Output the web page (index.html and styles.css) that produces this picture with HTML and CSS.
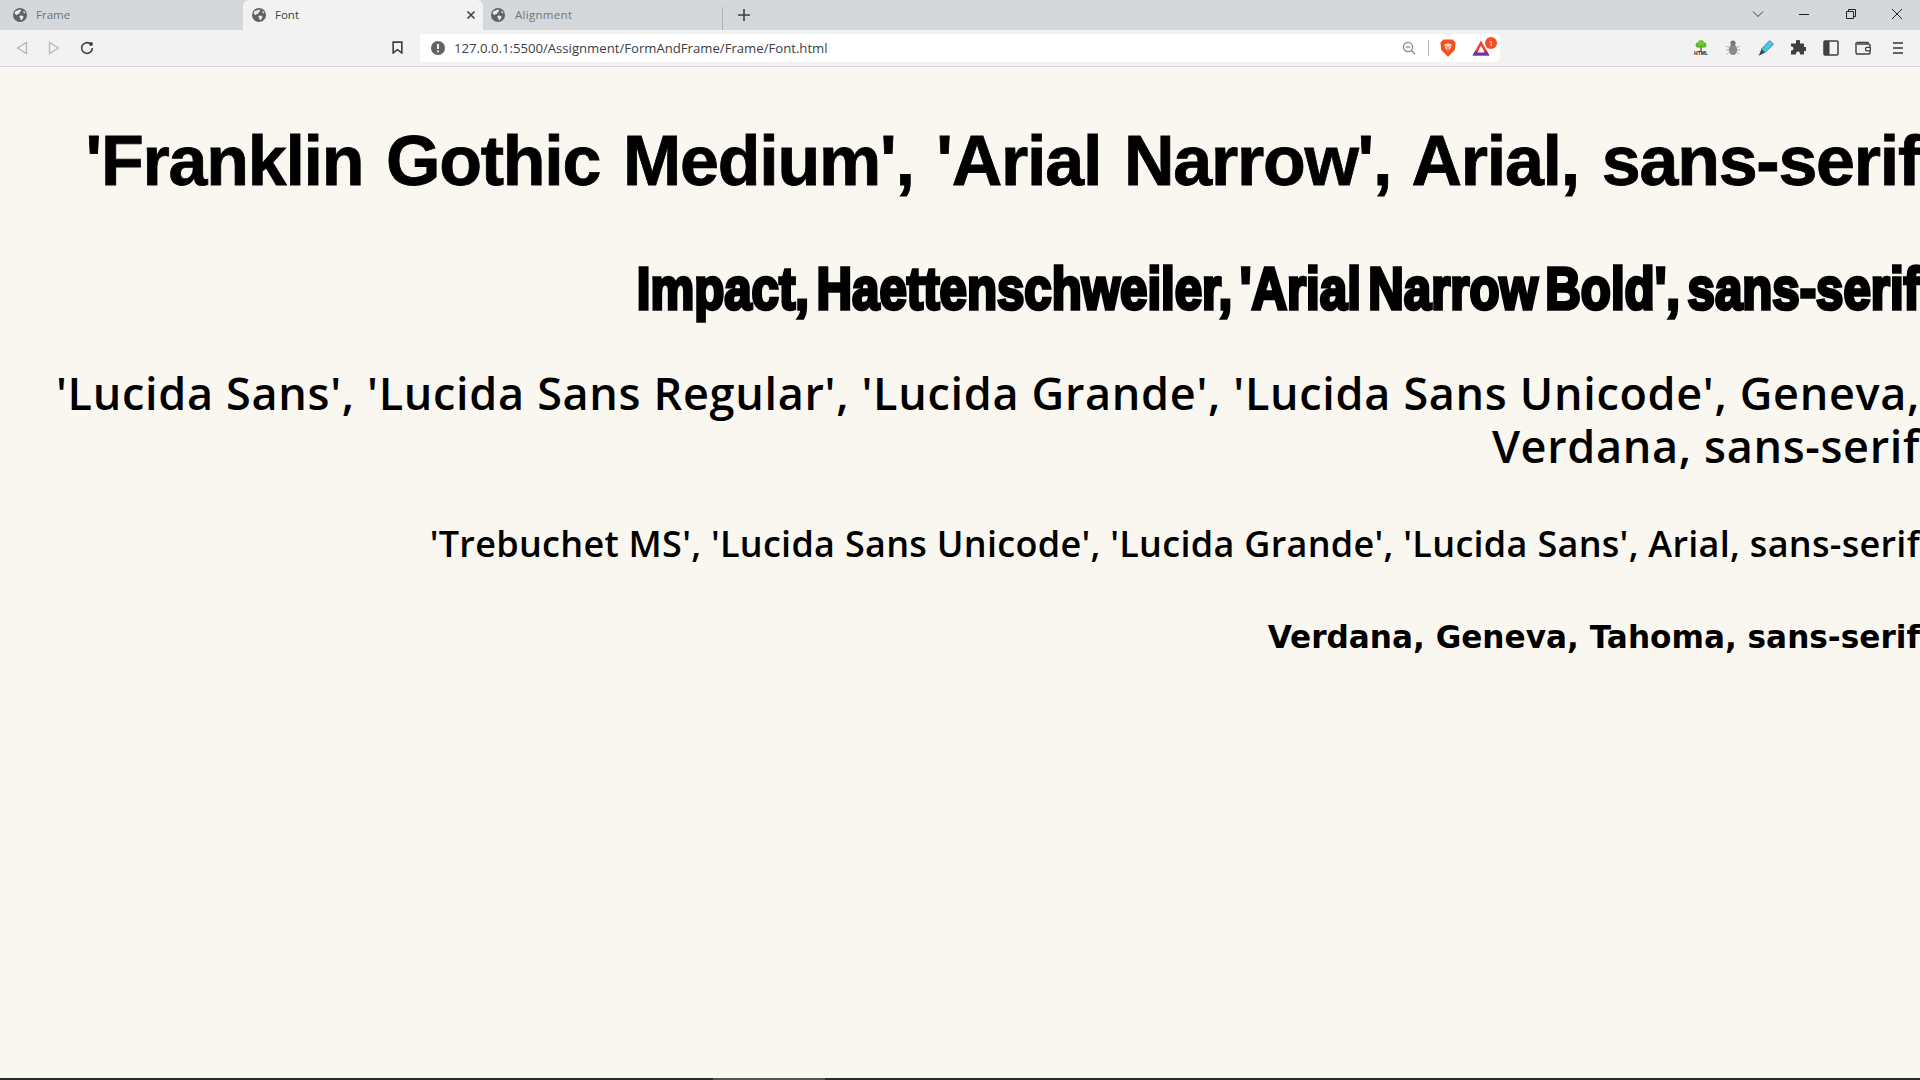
FILE: index.html
```html
<!DOCTYPE html>
<html lang="en">
<head>
    <meta charset="UTF-8">
    <meta name="viewport" content="width=device-width, initial-scale=1.0">
    <title>Font</title>
    <link rel="stylesheet" href="styles.css">
</head>
<body>

<svg class="defs" width="0" height="0">
    <symbol id="globe" viewBox="0 0 14 14">
        <circle cx="7" cy="7" r="7" fill="#5f6368"/>
        <path d="M2.4 3.2 L5 2.2 L7.6 1.6 L8.2 3 L6.4 4.4 L6.2 6 L4.6 6 L3.6 7.2 L1.6 5.6 Z M7.4 7.4 L10.2 8 L10.4 9.6 L8.8 12 L7.8 12.2 L7.2 10 L6.2 8.8 Z M10.8 2.8 L12.6 5 L11.2 5.2 L10.2 4 Z" fill="#e8eaed"/>
    </symbol>
</svg>

<div class="browser">
    <div class="tabstrip">
        <div class="tab">
            <svg class="favicon"><use href="#globe"/></svg>
            <span class="tab-title">Frame</span>
        </div>
        <div class="tab active">
            <svg class="favicon"><use href="#globe"/></svg>
            <span class="tab-title">Font</span>
            <svg class="tab-close" viewBox="0 0 10 10"><path d="M1.5 1.5 L8.5 8.5 M8.5 1.5 L1.5 8.5" stroke="#3c4043" stroke-width="1.6"/></svg>
        </div>
        <div class="tab last">
            <svg class="favicon"><use href="#globe"/></svg>
            <span class="tab-title">Alignment</span>
        </div>
        <svg class="new-tab" viewBox="0 0 12 12"><path d="M6 0 V12 M0 6 H12" stroke="#3c4043" stroke-width="1.6"/></svg>
        <div class="window-controls">
            <svg class="win-icon" viewBox="0 0 12 12"><path d="M1 3.5 L6 8.5 L11 3.5" fill="none" stroke="#3c4043"/></svg>
            <svg class="win-icon" viewBox="0 0 12 12"><path d="M1 6.5 H11" stroke="#202124"/></svg>
            <svg class="win-icon" viewBox="0 0 12 12"><path d="M1.5 3.5 H8.5 V10.5 H1.5 Z M3.5 3.5 V1.5 H10.5 V8.5 H8.5" fill="none" stroke="#202124"/></svg>
            <svg class="win-icon" viewBox="0 0 12 12"><path d="M1 1 L11 11 M11 1 L1 11" stroke="#202124"/></svg>
        </div>
    </div>

    <div class="toolbar">
        <div class="nav-buttons">
            <svg class="nav-icon" viewBox="0 0 12 14"><path d="M10.5 1.5 V12.5 L1.5 7 Z" fill="none" stroke="#b4b7ba" stroke-width="1.3"/></svg>
            <svg class="nav-icon" viewBox="0 0 12 14"><path d="M1.5 1.5 V12.5 L10.5 7 Z" fill="none" stroke="#b4b7ba" stroke-width="1.3"/></svg>
            <svg class="nav-icon" viewBox="0 0 14 14"><path d="M12.4 7 A5.4 5.4 0 1 1 9.8 2.4" fill="none" stroke="#3c4043" stroke-width="1.6"/><circle cx="11" cy="3" r="1.9" fill="#3c4043"/></svg>
        </div>
        <svg class="bookmark" viewBox="0 0 10 12"><path d="M1 1 H9 V11 L5 8 L1 11 Z" fill="none" stroke="#3c4043" stroke-width="1.5"/></svg>
        <div class="address-bar">
            <svg class="info-icon" viewBox="0 0 14 14"><circle cx="7" cy="7" r="7" fill="#5f6368"/><path d="M7 3 V8 M7 9.5 V11.2" stroke="#fff" stroke-width="1.8"/></svg>
            <span class="url">127.0.0.1:5500/Assignment/FormAndFrame/Frame/Font.html</span>
            <svg class="zoom-icon" viewBox="0 0 14 14"><circle cx="6" cy="6" r="4.6" fill="none" stroke="#80868b" stroke-width="1.2"/><path d="M9.5 9.5 L13 13" stroke="#80868b" stroke-width="1.2"/><path d="M3.6 6 H8.4" stroke="#80868b" stroke-width="1.2"/></svg>
            <span class="bar-divider"></span>
            <svg class="brave-icon" viewBox="0 0 16 18">
                <path d="M3.6 0.4 H12.4 L15.6 3.6 L14.8 11 L8 17.8 L1.2 11 L0.4 3.6 Z" fill="#f4511e"/>
                <path d="M4.4 5.4 L6.6 4.6 H9.4 L11.6 5.4 L11 8.4 L9.4 10.6 L8 12 L6.6 10.6 L5 8.4 Z" fill="#ffd9c9"/>
                <path d="M5.8 7.2 L7.2 8 M10.2 7.2 L8.8 8 M7 10.4 H9 M8 8 V10.4" stroke="#f4511e" stroke-width="0.9" fill="none"/>
            </svg>
            <div class="bat-wrap">
                <svg class="bat-icon" viewBox="0 0 18 16">
                    <path d="M9 0.5 L17.5 15.5 H0.5 Z" fill="#f0403c"/>
                    <path d="M3 11.2 H15 L17.5 15.5 H0.5 Z" fill="#7b2d9b"/>
                    <path d="M9 5.6 L12.6 12.4 H5.4 Z" fill="#fff"/>
                </svg>
                <span class="badge">1</span>
            </div>
        </div>
        <div class="extensions">
            <svg class="ext-icon" viewBox="0 0 16 16">
                <circle cx="5.4" cy="5" r="2.8" fill="#5cb82a"/>
                <circle cx="10.6" cy="5" r="2.8" fill="#5cb82a"/>
                <circle cx="8" cy="3" r="3" fill="#6cc636"/>
                <rect x="7.2" y="6" width="1.6" height="5" fill="#a0662a"/>
                <text x="8" y="15.4" class="ext-label">HTML</text>
            </svg>
            <svg class="ext-icon" viewBox="0 0 16 16">
                <ellipse cx="8" cy="9.6" rx="4.2" ry="5.4" fill="#8a8a8a"/>
                <circle cx="8" cy="3" r="2.6" fill="#777"/>
                <path d="M1 6 L4.5 7.6 M15 6 L11.5 7.6 M1 10 H4 M15 10 H12 M1.6 14 L4.6 12.4 M14.4 14 L11.4 12.4" stroke="#b5b5b5" stroke-width="1"/>
            </svg>
            <svg class="ext-icon" viewBox="0 0 16 16">
                <path d="M3.4 9 L11.6 0.6 L15.6 4.2 L7 12.6 Z" fill="#4fc3e8" stroke="#2a6f8e" stroke-width="0.7"/>
                <path d="M3.4 9 L7 12.6 L4.4 14 L0.6 15.8 L2.2 12.2 Z" fill="#37474f"/>
            </svg>
            <svg class="ext-icon" viewBox="0 0 16 16"><path d="M6 1.5 A2 2 0 0 1 10 1.5 V3.5 H14 V7 H15.2 A2 2 0 0 1 15.2 11 H14 V14.5 H10 V13.4 A2 2 0 0 0 6 13.4 V14.5 H1 V10.6 H2 A2.2 2.2 0 0 0 2 6.4 H1 V3.5 H6 Z" fill="#3c4043"/></svg>
            <svg class="ext-icon" viewBox="0 0 16 16"><rect x="1" y="1" width="14" height="14" rx="1" fill="none" stroke="#3c4043" stroke-width="1.5"/><rect x="1" y="1" width="5.5" height="14" fill="#3c4043"/></svg>
            <svg class="ext-icon" viewBox="0 0 16 16"><path d="M13 4 V2.4 L2.6 2.4 A1.5 1.5 0 0 0 1 4 V12.6 A1.5 1.5 0 0 0 2.6 14 H13.4 A1.5 1.5 0 0 0 15 12.6 V5.4 A1.5 1.5 0 0 0 13.4 4 H2" fill="none" stroke="#3c4043" stroke-width="1.4"/><rect x="10.5" y="7.4" width="5" height="3.4" rx="1.6" fill="#f2f2f2" stroke="#3c4043" stroke-width="1.3"/></svg>
            <svg class="ext-icon menu-icon" viewBox="0 0 16 16"><path d="M3 3 H13 M3 8 H13 M3 13 H13" stroke="#5f6368" stroke-width="2"/></svg>
        </div>
    </div>

    <div class="page">
        <h1 class="franklin">'Franklin Gothic Medium', 'Arial Narrow', Arial, sans-serif</h1>
        <h2 class="impact">Impact, Haettenschweiler, 'Arial Narrow Bold', sans-serif</h2>
        <h3 class="lucida">'Lucida Sans', 'Lucida Sans Regular', 'Lucida Grande', 'Lucida Sans Unicode', Geneva, Verdana, sans-serif</h3>
        <h4 class="trebuchet">'Trebuchet MS', 'Lucida Sans Unicode', 'Lucida Grande', 'Lucida Sans', Arial, sans-serif</h4>
        <h5 class="verdana">Verdana, Geneva, Tahoma, sans-serif</h5>
    </div>

    <div class="taskbar-edge"><span class="taskbar-active"></span></div>
</div>

</body>
</html>
```

FILE: styles.css
```css
* {
    box-sizing: border-box;
}
body {
    margin: 0;
    background-color: #faf7f0;
    font-family: "Open Sans", "Noto Sans", sans-serif;
    overflow: hidden;
}
.defs {
    display: block;
    height: 0;
}
.browser {
    display: flex;
    flex-direction: column;
    height: 1080px;
}

/* tabs */
.tabstrip {
    display: flex;
    align-items: stretch;
    height: 30px;
    background-color: #d5d8db;
    flex-shrink: 0;
}
.tab {
    display: flex;
    align-items: center;
    width: 240px;
    padding: 0 0 1px 13px;
    font-size: 11.5px;
    color: #6f7478;
}
.tab.active {
    background-color: #f2f2f2;
    border-radius: 6px 6px 0 0;
    color: #3c4043;
    margin-left: 3px;
    padding-left: 9px;
}
.tab.last {
    width: 240px;
    border-right: 1px solid #b0b3b6;
    margin: 7px 0 0;
    height: 23px;
    padding: 0 0 8px 8px;
}
.tab.last .favicon {
    margin-right: 10px;
}
.tab.last .tab-title {
    letter-spacing: 0.3px;
}
.favicon {
    width: 14px;
    height: 14px;
    margin-right: 9px;
    flex-shrink: 0;
}
.tab-title {
    flex: 1;
}
.tab-close {
    width: 10px;
    height: 10px;
    margin-right: 7px;
}
.new-tab {
    width: 12px;
    height: 12px;
    margin: 9px 0 0 15px;
}
.window-controls {
    display: flex;
    align-items: center;
    margin-left: auto;
    padding-right: 11px;
    gap: 28.5px;
}
.win-icon {
    width: 12px;
    height: 12px;
    margin: 0 6px 2px 0;
}

/* toolbar */
.toolbar {
    display: flex;
    align-items: center;
    height: 37px;
    padding-bottom: 1px;
    background-color: #f2f2f2;
    border-bottom: 1px solid #d5d8db;
    flex-shrink: 0;
}
.nav-buttons {
    display: flex;
    align-items: center;
    gap: 20px;
    padding-left: 16px;
    width: 392px;
}
.nav-icon {
    width: 12px;
    height: 14px;
}
.nav-icon:last-child {
    width: 14px;
}
.bookmark {
    width: 11px;
    height: 13px;
    margin-right: 17px;
}
.address-bar {
    display: flex;
    align-items: center;
    width: 1080px;
    height: 28px;
    background-color: #fff;
    border-radius: 0 5px 5px 0;
    padding-left: 11px;
}
.info-icon {
    width: 14px;
    height: 14px;
    margin-right: 9px;
}
.url {
    flex: 1;
    font-size: 13.15px;
    color: #3c4043;
}
.zoom-icon {
    width: 14px;
    height: 14px;
    margin-right: 12px;
}
.bar-divider {
    width: 1px;
    height: 16px;
    background-color: #b0b3b6;
    margin-right: 11px;
}
.brave-icon {
    width: 16px;
    height: 18px;
    margin-right: 16px;
}
.bat-wrap {
    position: relative;
    width: 18px;
    height: 16px;
    margin-right: 10px;
}
.bat-icon {
    display: block;
    width: 18px;
    height: 16px;
}
.badge {
    position: absolute;
    top: -3px;
    right: -7px;
    width: 12px;
    height: 12px;
    border-radius: 50%;
    background-color: #f4511e;
    color: #fff;
    font-size: 8px;
    line-height: 12px;
    text-align: center;
}
.extensions {
    display: flex;
    align-items: center;
    gap: 16.4px;
    margin-left: 193px;
}
.ext-icon {
    width: 16px;
    height: 16px;
}
.menu-icon {
    margin-left: 3px;
}
.ext-label {
    font-family: "Liberation Sans", sans-serif;
    font-size: 5px;
    font-weight: bold;
    text-anchor: middle;
    fill: #111;
}

/* page */
.page {
    flex: 1;
    background-color: #faf7f0;
    text-align: right;
    color: #000;
    overflow: hidden;
}
.franklin {
    font-family: "Liberation Sans", Arial, sans-serif;
    font-size: 70px;
    letter-spacing: -1.25px;
    word-spacing: 4.6px;
    -webkit-text-stroke: 0.8px #000;
    margin: 55px 0 0;
    line-height: 78px;
}
.impact {
    font-family: "Liberation Sans", sans-serif;
    font-size: 60px;
    word-spacing: -7.5px;
    -webkit-text-stroke: 3.5px #000;
    margin: 57px 0 0;
    line-height: 64px;
    white-space: nowrap;
    transform: scaleX(0.82);
    transform-origin: right center;
}
.lucida {
    font-family: "Open Sans", "Noto Sans", sans-serif;
    font-weight: 600;
    font-size: 45px;
    letter-spacing: 0.68px;
    line-height: 53px;
    margin: 45px 0 0;
}
.trebuchet {
    font-family: "Open Sans", "Noto Sans", sans-serif;
    font-weight: 600;
    font-size: 36px;
    letter-spacing: 0.29px;
    line-height: 44px;
    margin: 50px 0 0;
}
.verdana {
    font-family: "DejaVu Sans", Verdana, sans-serif;
    font-size: 31.15px;
    line-height: 38px;
    margin: 52px 0 0;
}

.taskbar-edge {
    height: 2px;
    background-color: #2b2b2b;
    flex-shrink: 0;
    padding-left: 713px;
}
.taskbar-active {
    display: block;
    width: 112px;
    height: 2px;
    background-color: #555;
}
```
